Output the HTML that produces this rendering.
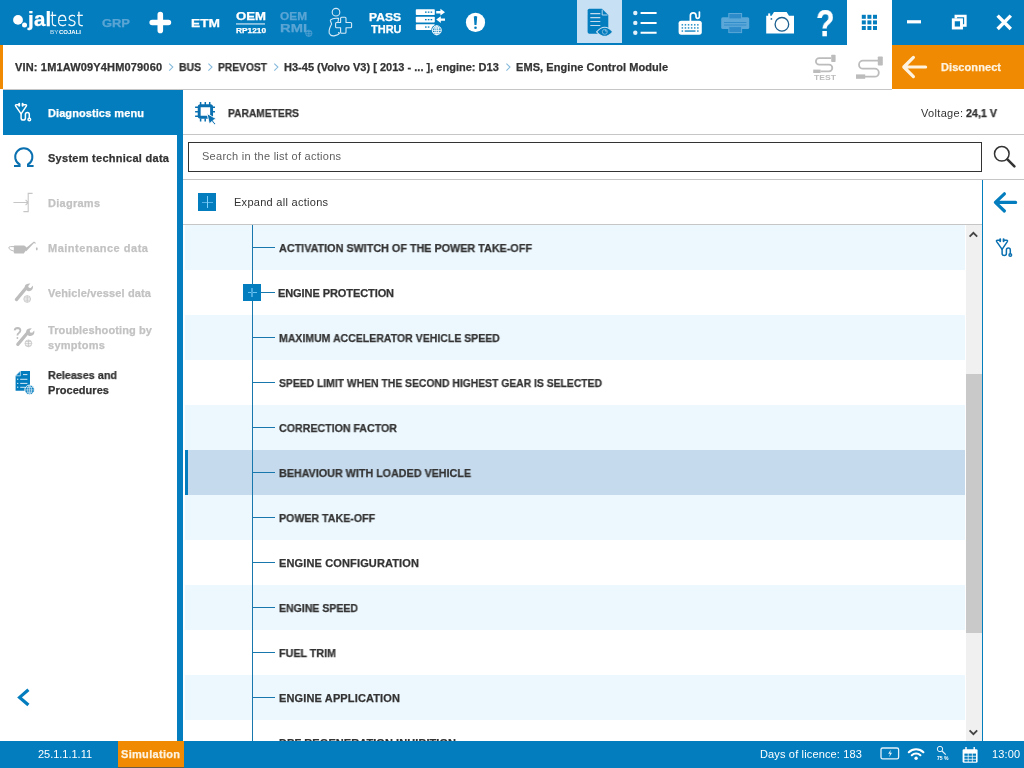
<!DOCTYPE html>
<html lang="en"><head>
<meta charset="utf-8">
<title>Jaltest - Parameters</title>
<style>
html,body{margin:0;padding:0;}
body{width:1024px;height:768px;overflow:hidden;background:#fff;position:relative;
  font-family:"Liberation Sans","DejaVu Sans",sans-serif;color:#333;}
.abs{position:absolute;}
svg{position:absolute;overflow:visible;}
.t{position:absolute;white-space:nowrap;will-change:transform;line-height:16px;height:16px;margin-top:-8px;font-size:11px;}
.b{font-weight:bold;}
.b,.lt,.crumb{-webkit-text-stroke:0.25px;}
#topbar{left:0;top:0;width:1024px;height:45px;background:#047dbe;}
#crumbline{left:3px;top:89px;width:889px;height:1px;background:#c6c6c6;}
#ostrip{left:0;top:45px;width:3px;height:44px;background:#f08a02;}
#disc{left:892px;top:45px;width:132px;height:44px;background:#f08a02;}
#menuactive{left:3px;top:90px;width:180px;height:45px;background:#047dbe;}
#vbar{left:177px;top:90px;width:6px;height:651px;background:#047dbe;}
#status{left:0;top:741px;width:1024px;height:27px;background:#047dbe;}
#sim{left:118px;top:741px;width:66px;height:26px;background:#f08a02;}
.hl{position:absolute;height:1px;background:#c6c6c6;}
.row{position:absolute;left:185px;width:780px;height:45px;}
.row.odd{background:#edf8fe;}
.row.sel{background:#c5daec;}
.conn{position:absolute;left:253px;width:22px;height:1px;background:#1878ae;}
.dis{color:#c2c2c2;}
.lt{font-weight:bold;color:#333;left:278.6px;}
.crumb{font-weight:bold;color:#333;font-size:11px;}
.sep{color:#7fb2d6;font-size:13px;}
.w{color:#fff;}
</style>
</head>
<body>
<!-- TOP BAR -->
<div id="topbar" class="abs"></div>
<div class="abs" style="left:577px;top:0;width:45px;height:43px;background:#c8e0f3;"></div>
<div class="abs" style="left:847px;top:0;width:45px;height:46px;background:#fff;"></div>
<!--TOPICONS_START-->
<!-- logo -->
<svg width="1024" height="45" style="left:0;top:0" viewBox="0 0 1024 45">
 <circle cx="18" cy="19.9" r="4.9" fill="#fff"></circle>
 <circle cx="24.5" cy="25" r="2.5" fill="#fff"></circle>
 <!-- plus -->
 <path d="M152.2 22.5H168.4M160.3 14.6V30.4" stroke="#fff" stroke-width="5.6" stroke-linecap="round" fill="none"></path>
 <!-- OEM underline -->
 <rect x="236" y="23.4" width="29" height="1.1" fill="#e4f1fa"></rect>
 <!-- small globe next to RMI -->
 <g stroke="#5aa5d4" stroke-width="0.7" fill="none"><circle cx="308.8" cy="33.3" r="3.2"></circle><path d="M305.6 33.3h6.4M308.8 30.1v6.4M306.3 31.5h5M306.3 35.1h5"></path></g>
 <!-- person + plus (outline) -->
 <g stroke="#d6e9f6" stroke-width="1.1" fill="none" stroke-linejoin="round">
  <circle cx="336" cy="12.2" r="3.8"></circle>
  <path d="M330.2 20.2Q333 17.6 338.6 18.4L338 22 M330.2 20.2L331.6 24Q328.4 30 329.2 33.2Q331 36.8 335 35.6Q339.4 34.4 339.6 33L338 32.6"></path>
  <path d="M341.6 17.3h3.4a1 1 0 0 1 1 1v4.2h4.6a1 1 0 0 1 1 1v3.2a1 1 0 0 1 -1 1h-4.6v4.6a1 1 0 0 1 -1 1h-3.4a1 1 0 0 1 -1 -1v-4.6h-4a1 1 0 0 1 -1 -1v-3.2a1 1 0 0 1 1 -1h4v-4.2a1 1 0 0 1 1 -1z"></path>
 </g>
 <!-- server icon -->
 <g fill="#fff">
  <rect x="415.8" y="9.2" width="19" height="5.8" rx="0.8"></rect>
  <rect x="415.8" y="16.8" width="19" height="5.8" rx="0.8"></rect>
  <rect x="415.8" y="24.2" width="19" height="5.8" rx="0.8"></rect>
  <path d="M436.2 11h4.2v-2.2l4.6 3.4l-4.6 3.4v-2.2h-4.2z"></path>
  <path d="M445 18.4h-4.2v-2.2l-4.6 3.4l4.6 3.4v-2.2h4.2z"></path>
 </g>
 <g fill="#047dbe"><rect x="425" y="11.5" width="1.6" height="1.3"></rect><rect x="427.8" y="11.5" width="1.6" height="1.3"></rect><rect x="430.6" y="11.5" width="1.6" height="1.3"></rect>
  <rect x="425" y="19" width="1.6" height="1.3"></rect><rect x="427.8" y="19" width="1.6" height="1.3"></rect><rect x="430.6" y="19" width="1.6" height="1.3"></rect>
  <rect x="425" y="26.4" width="1.6" height="1.3"></rect><rect x="427.8" y="26.4" width="1.6" height="1.3"></rect>
  <circle cx="436.8" cy="30.3" r="5.6"></circle></g>
 <g stroke="#fff" stroke-width="0.9" fill="none"><circle cx="436.8" cy="30.3" r="4.5"></circle><ellipse cx="436.8" cy="30.3" rx="2" ry="4.5"></ellipse><path d="M432.3 30.3h9M433 28h7.6M433 32.6h7.6M436.8 25.8v9"></path></g>
 <!-- exclamation -->
 <circle cx="475.5" cy="22.4" r="9.6" fill="#fff"></circle>
 <path d="M473.8 16.6q1.7-1.2 3.4 0l-0.7 8.4h-2z" fill="#047dbe"></path>
 <circle cx="475.5" cy="27.7" r="1.3" fill="#047dbe"></circle>
 <!-- doc + eye (active) -->
 <path d="M589.4 8.8h12.6l6.3 6.3v16.9a1.8 1.8 0 0 1 -1.8 1.8h-17.1a1.8 1.8 0 0 1 -1.8 -1.8v-21.4a1.8 1.8 0 0 1 1.8 -1.8z" fill="#047dbe"></path>
 <path d="M602.2 9.6v5.4h5.4" stroke="#c8e0f3" stroke-width="0.9" fill="none"></path>
 <path d="M590.3 13.7h10M590.3 17.6h10M590.3 21.5h10M590.3 25.5h10" stroke="#c5daec" stroke-width="1.2"></path>
 <path d="M596.6 31.8Q604.7 22.6 612.8 31.8Q604.7 41 596.6 31.8z" fill="#047dbe" stroke="#c8e0f3" stroke-width="1.1"></path>
 <circle cx="604.8" cy="31.8" r="2.5" fill="none" stroke="#9cc8e8" stroke-width="0.7"></circle><path d="M604.8 30.4a1.4 1.4 0 0 1 1.4 1.4" stroke="#c8e0f3" stroke-width="0.7" fill="none"></path>
 <!-- list icon -->
 <g fill="#e4f1fa"><circle cx="635.3" cy="13" r="2.2"></circle><circle cx="635.3" cy="22.9" r="2.2"></circle><circle cx="635.3" cy="32.7" r="2.2"></circle></g>
 <path d="M640.6 13h16M640.6 22.9h16M640.6 32.7h16" stroke="#fff" stroke-width="2"></path>
 <!-- keyboard -->
 <rect x="678.6" y="20.7" width="23.2" height="14" rx="2.6" fill="#fff"></rect>
 <path d="M690.4 21v-5.4a2.8 2.8 0 0 1 5.6 0v1a1.7 1.7 0 0 0 3.4 0v-4.6" stroke="#fff" stroke-width="1.7" fill="none" stroke-linecap="round"></path>
 <g fill="#047dbe">
  <rect x="681.6" y="24.2" width="1.5" height="1.3"></rect><rect x="684.7" y="24.2" width="1.5" height="1.3"></rect><rect x="687.8" y="24.2" width="1.5" height="1.3"></rect><rect x="690.9" y="24.2" width="1.5" height="1.3"></rect><rect x="694" y="24.2" width="1.5" height="1.3"></rect><rect x="697.1" y="24.2" width="1.5" height="1.3"></rect>
  <rect x="681.6" y="27.3" width="1.5" height="1.3"></rect><rect x="684.7" y="27.3" width="1.5" height="1.3"></rect><rect x="687.8" y="27.3" width="1.5" height="1.3"></rect><rect x="690.9" y="27.3" width="1.5" height="1.3"></rect><rect x="694" y="27.3" width="1.5" height="1.3"></rect><rect x="697.1" y="27.3" width="1.5" height="1.3"></rect>
  <rect x="681.6" y="30.4" width="1.5" height="1.3"></rect><rect x="684.7" y="30.4" width="10.8" height="1.3"></rect><rect x="697.1" y="30.4" width="1.5" height="1.3"></rect>
 </g>
 <!-- printer (disabled) -->
 <g fill="#5aa7d8">
  <rect x="721.2" y="17.2" width="28" height="11.8" rx="1.5"></rect>
 </g>
 <g fill="#2c8bc8" stroke="#5aa7d8" stroke-width="1"><rect x="728.8" y="13.5" width="12.8" height="5.4"></rect><rect x="728.8" y="26.6" width="12.8" height="6"></rect></g>
 <path d="M724 22.5h22.4M724 25h22.4" stroke="#2c8bc8" stroke-width="0.9"></path>
 <!-- camera -->
 <path d="M766.2 15.8h5.4l2.4-3.9h12.6l2.4 3.9h5v17.6h-27.8z" fill="#fff"></path>
 <rect x="768.2" y="13.4" width="2" height="2.6" fill="#fff"></rect>
 <circle cx="781.9" cy="24.3" r="6.8" fill="#fff" stroke="#1a5f8f" stroke-width="1.3"></circle>
 <circle cx="771.4" cy="18.9" r="0.9" fill="#1f6fa3"></circle>
 <!-- grid -->
 <g fill="#047dbe">
  <rect x="861.8" y="14.8" width="4" height="4"></rect><rect x="867.4" y="14.8" width="4" height="4"></rect><rect x="873" y="14.8" width="4" height="4"></rect>
  <rect x="861.8" y="20.4" width="4" height="4"></rect><rect x="867.4" y="20.4" width="4" height="4"></rect><rect x="873" y="20.4" width="4" height="4"></rect>
  <rect x="861.8" y="26" width="4" height="4"></rect><rect x="867.4" y="26" width="4" height="4"></rect><rect x="873" y="26" width="4" height="4"></rect>
 </g>
 <!-- window controls -->
 <rect x="907" y="20.2" width="14" height="3.2" fill="#fff"></rect>
 <path d="M955.8 18.4v-2.4h9.6v9.4h-2.6" stroke="#fff" stroke-width="2.5" fill="none"></path>
 <rect x="953.3" y="19.8" width="8.2" height="8.2" stroke="#fff" stroke-width="2.9" fill="none"></rect>
 <path d="M997.6 15.6l13.2 13.4M1010.8 15.6l-13.2 13.4" stroke="#fff" stroke-width="3.4" fill="none"></path>
</svg>
<span class="t w" style="left:28.2px;top:19.3px;font-size:20.5px;line-height:24px;height:24px;margin-top:-12px"><span style="display: inline-block; width: 21.6px; font-weight: bold; -webkit-text-stroke: 0.25px rgb(255, 255, 255); letter-spacing: 0.2px;">jal</span><span style="display: inline-block; position: relative; top: -0.4px; font-size: 19.4px; font-family: &quot;DejaVu Sans Light&quot;, &quot;DejaVu Sans&quot;, sans-serif; font-weight: 200; -webkit-text-stroke: 0.35px rgb(255, 255, 255); transform: scaleX(0.897); transform-origin: 0px 50%;">test</span></span>
<span class="t w" style="left: 50.2px; top: 32.6px; font-size: 4.6px; line-height: 6px; height: 6px; margin-top: -3px; color: rgb(207, 228, 243); transform: scaleX(1.368); transform-origin: 0px 50%;">BY</span>
<span class="t b w" style="left: 59.4px; top: 32.6px; font-size: 4.8px; line-height: 6px; height: 6px; margin-top: -3px; -webkit-text-stroke: 0px; transform: scaleX(1.25); transform-origin: 0px 50%;">COJALI</span>
<span class="t b" style="left: 102px; top: 22.5px; font-size: 10.5px; color: rgb(90, 165, 212); transform: scaleX(1.23); transform-origin: 0px 50%;">GRP</span>
<span class="t b w" style="left: 191px; top: 22.7px; font-size: 10.8px; transform: scaleX(1.272); transform-origin: 0px 50%;">ETM</span>
<span class="t b w" style="left: 235.5px; top: 17.4px; font-size: 10.4px; transform: scaleX(1.267); transform-origin: 0px 50%;">OEM</span>
<span class="t b w" style="left: 235.5px; top: 30.8px; font-size: 7.4px; line-height: 10px; height: 10px; margin-top: -5px; transform: scaleX(1.123); transform-origin: 0px 50%;">RP1210</span>
<span class="t b" style="left: 279.5px; top: 17px; font-size: 10.4px; color: rgb(90, 165, 212); transform: scaleX(1.141); transform-origin: 0px 50%;">OEM</span>
<span class="t b" style="left: 279.5px; top: 27.7px; font-size: 11.8px; color: rgb(90, 165, 212); transform: scaleX(1.249); transform-origin: 0px 50%;">RMI</span>
<span class="t b w" style="left: 369.4px; top: 17px; font-size: 10.6px; transform: scaleX(1.14); transform-origin: 0px 50%;">PASS</span>
<span class="t b w" style="left: 370.8px; top: 28.5px; font-size: 10.6px; transform: scaleX(1.036); transform-origin: 0px 50%;">THRU</span>
<span class="t b w" style="left:816.2px;top:24px;font-size:36px;line-height:40px;height:40px;margin-top:-20px;transform:scaleX(0.84);transform-origin:0 50%;">?</span>
<!--TOPICONS_END-->

<!-- BREADCRUMB ROW -->
<div id="crumbline" class="abs"></div>
<div id="ostrip" class="abs"></div>
<span class="t crumb" style="left: 15px; top: 67px; letter-spacing: 0.16px;">VIN: 1M1AW09Y4HM079060</span>
<span class="t crumb" style="left: 179px; top: 67px; transform: scaleX(0.947); transform-origin: 0px 50%;">BUS</span>
<span class="t crumb" style="left: 218px; top: 67px; transform: scaleX(0.932); transform-origin: 0px 50%;">PREVOST</span>
<span class="t crumb" style="left: 284px; top: 67px; letter-spacing: 0.01px;">H3-45 (Volvo V3) [ 2013 - ... ], engine: D13</span>
<span class="t crumb" style="left: 516px; top: 67px; letter-spacing: 0.07px;">EMS, Engine Control Module</span>
<svg width="1024" height="46" style="left:0;top:44px" viewBox="0 44 1024 46">
 <g stroke="#86badc" stroke-width="1.1" fill="none">
  <path d="M169.2 63.6l3.6 3.5l-3.6 3.5"></path><path d="M208.4 63.6l3.6 3.5l-3.6 3.5"></path><path d="M274.3 63.6l3.6 3.5l-3.6 3.5"></path><path d="M506.4 63.6l3.6 3.5l-3.6 3.5"></path>
 </g>
 <!-- cable TEST icon -->
 <g stroke="#bcbcbc" stroke-width="1.8" fill="none">
  <path d="M831 58.1H819.2a3.3 3.3 0 0 0 0 6.6H829a3.3 3.3 0 0 1 0 6.6H820.6"></path>
  <path d="M878 60.7H863a4 4 0 0 0 0 8H874.8a4 4 0 0 1 0 8H865"></path>
 </g>
 <g fill="#bcbcbc">
  <rect x="831.2" y="54.8" width="4.4" height="7.2" rx="0.8"></rect>
  <rect x="813.2" y="69.6" width="7.4" height="3.4"></rect>
  <rect x="877.8" y="56.4" width="5" height="9.2" rx="0.8"></rect>
  <rect x="856" y="74.4" width="9.2" height="4.4"></rect>
 </g>
 <!-- disconnect arrow -->
</svg>
<span class="t" style="left: 813.5px; top: 77.8px; font-size: 7.6px; line-height: 10px; height: 10px; margin-top: -5px; color: rgb(188, 188, 188); font-weight: bold; transform: scaleX(1.133); transform-origin: 0px 50%;">TEST</span>
<div id="disc" class="abs"></div>
<svg width="30" height="30" style="left:900px;top:52px" viewBox="900 52 30 30"><path d="M904.4 67H925.6M913.4 57.4L903.8 67L913.4 76.6" stroke="#fdf3e0" stroke-width="3.2" fill="none" stroke-linecap="round" stroke-linejoin="round"></path></svg>
<span class="t b" style="left: 941px; top: 67px; color: rgb(253, 243, 224); letter-spacing: 0.08px;">Disconnect</span>

<!-- LEFT MENU -->
<div id="menuactive" class="abs"></div>
<div id="vbar" class="abs"></div>
<span class="t b w" style="left: 48px; top: 113px; letter-spacing: 0.08px;">Diagnostics menu</span>
<span class="t b" style="left: 48px; top: 158px; letter-spacing: 0.27px;">System technical data</span>
<span class="t b dis" style="left: 48px; top: 203px; letter-spacing: 0.27px;">Diagrams</span>
<span class="t b dis" style="left: 48px; top: 248px; letter-spacing: 0.51px;">Maintenance data</span>
<span class="t b dis" style="left: 48px; top: 293px; letter-spacing: 0.15px;">Vehicle/vessel data</span>
<span class="t b dis" style="left: 48px; top: 330px; letter-spacing: 0.11px;">Troubleshooting by</span>
<span class="t b dis" style="left: 48px; top: 345px; letter-spacing: 0.28px;">symptoms</span>
<span class="t b" style="left: 48px; top: 375px; transform: scaleX(0.981); transform-origin: 0px 50%;">Releases and</span>
<span class="t b" style="left: 48px; top: 390px; letter-spacing: 0.05px;">Procedures</span>
<svg width="183" height="651" style="left:0;top:90px" viewBox="0 90 183 651">
 <g transform="translate(0 0)" stroke="#fff" stroke-width="1.5" fill="none" stroke-linecap="round" stroke-linejoin="round">
  <path d="M19.2 104.8H16.4Q15 104.8 15.7 106.1L21.1 113.9V117.9a2.15 2.15 0 0 0 4.3 0V114.5a1.95 1.95 0 0 1 3.9 0V117.9"></path>
  <path d="M22.6 104.8H25.6Q27 104.8 26.3 106.1L21.1 113.9"></path>
  <path d="M19.2 103.6v2.2M22.6 103.6v2.2" stroke-width="1.9"></path>
  <circle cx="29.3" cy="119.5" r="1.3"></circle></g>
 <!-- omega -->
 <path d="M14 166h5.6v-1.6a8.6 8.6 0 1 1 8.4 0v1.6h5.6" stroke="#0a70b0" stroke-width="2" fill="none"></path>
 <!-- diagrams -->
 <g stroke="#c6c6c6" stroke-width="1.1" fill="none"><path d="M13.4 202.5h14.8M32.6 193.4h-4.4v18.2h-4.8M25.6 199.8l2.6 2.7l-2.6 2.7"></path></g>
 <!-- oil can -->
 <g fill="#bdbdbd"><path d="M14.6 245.4h9.6l2.4 1.8v2.4l-2.8 3.8h-9.2q-0.8 0 -0.8 -0.8v-6.4q0 -0.8 0.8 -0.8z"></path><path d="M25.4 248.6l8.6-7.2l2 1.6l-0.8 0.8l-1.2-0.8l-8 8.6z"></path><ellipse cx="36.8" cy="248.8" rx="0.9" ry="1.6"></ellipse></g>
 <path d="M14 246.6h-3.4q-2 0 -1.8 1.4q0.4 2 5.2 3.2" stroke="#bdbdbd" stroke-width="1" fill="none"></path>
 <!-- wrench + globe -->
 <g stroke="#bdbdbd" fill="none">
  <path d="M16.4 299.6L26.6 287.4" stroke-width="3.2" stroke-linecap="round"></path>
  <path d="M30.4 283.4l-2.2 2.6l0.6 1.8l2 0.2l2-2.4q0.8 3.2-1.6 4.8q-2.2 1.4-4.4 0.2q-2.4-1.6-2-4.4q0.8-3 5.6-2.8z" fill="#bdbdbd" stroke="none"></path>
  <g stroke-width="0.7"><circle cx="27.2" cy="299" r="3.4"></circle><path d="M23.8 299h6.8M27.2 295.6v6.8M24.6 297.2h5.2M24.6 300.8h5.2"></path></g>
 </g>
 <g stroke="#bdbdbd" fill="none">
  <path d="M17.8 344.4L28 332.2" stroke-width="3.2" stroke-linecap="round"></path>
  <path d="M31.8 328.2l-2.2 2.6l0.6 1.8l2 0.2l2-2.4q0.8 3.2-1.6 4.8q-2.2 1.4-4.4 0.2q-2.4-1.6-2-4.4q0.8-3 5.6-2.8z" fill="#bdbdbd" stroke="none"></path>
  <g stroke-width="0.7"><circle cx="28.4" cy="343.4" r="3.4"></circle><path d="M25 343.4h6.8M28.4 340v6.8M25.8 341.6h5.2M25.8 345.2h5.2"></path></g>
  <path d="M14.6 330.4q0.4-2.4 3-2.4q2.8 0.2 2.8 2.6q0 1.4-1.6 2.4q-1.4 0.8-1.4 2.6" stroke-width="1.8"></path>
 </g>
 <circle cx="17.4" cy="338" r="0.9" fill="#bdbdbd"></circle>
 <!-- releases doc -->
 <path d="M20.4 371h9.6v19.7h-14.4v-14.9z" fill="#047dbe"></path>
 <path d="M15.6 375.8l4.8-4.8v4.8z" fill="#047dbe" stroke="#fff" stroke-width="0.6"></path>
 <g stroke="#d6e9f6" stroke-width="1"><path d="M23 374.6h4.4M20.2 379.3h7.2M20.2 383.4h7.2M20.2 387.3h5"></path></g>
 <g fill="#d6e9f6"><circle cx="17.7" cy="379.3" r="0.7"></circle><circle cx="17.7" cy="383.4" r="0.7"></circle><circle cx="17.7" cy="387.3" r="0.7"></circle></g>
 <circle cx="29.6" cy="389.9" r="4.8" fill="#047dbe" stroke="#fff" stroke-width="0.9"></circle>
 <g stroke="#d6e9f6" stroke-width="0.7" fill="none"><path d="M25.4 389.9h8.4M29.6 385.7v8.4M26.4 387.6h6.4M26.4 392.2h6.4"></path><ellipse cx="29.6" cy="389.9" rx="2" ry="4.2"></ellipse></g>
 <!-- collapse chevron -->
 <path d="M28.4 689.8L19.6 697.4L28.4 705" stroke="#047dbe" stroke-width="3.2" fill="none"></path>
</svg>
<!-- parameters icon -->
<svg width="30" height="30" style="left:192px;top:98px" viewBox="192 98 30 30">
 <rect x="199.2" y="105.7" width="12.4" height="11.6" rx="1.2" fill="none" stroke="#0a70b0" stroke-width="2.9"></rect>
 <g stroke="#0a70b0" stroke-width="1.5"><path d="M200.6 101.9v3M205.3 101.9v3M209.7 101.9v3M200.6 118.6v2.8M205.2 118.6v2.8M195.1 107.3h3M195.1 111.8h3M195.1 116.2h3M212.8 107.3h2.2M212.8 111.8h2.2"></path></g>
 <path d="M207 113.6l9.2 5.2l-3.2 1.6l2.6 3.4l-1.2 1l-2.6-3.4l-2.4 2.6z" fill="#0a70b0" stroke="#fff" stroke-width="0.9"></path>
</svg>

<!-- CONTENT HEADER -->
<span class="t b" style="left: 228px; top: 113px; transform: scaleX(0.932); transform-origin: 0px 50%;">PARAMETERS</span>
<span class="t" style="left: 921px; top: 113px; letter-spacing: 0.32px;">Voltage:</span>
<span class="t b" style="left: 966px; top: 113px; transform: scaleX(0.974); transform-origin: 0px 50%;">24,1 V</span>
<div class="hl" style="left:183px;top:134px;width:841px;"></div>
<div class="abs" style="left:188px;top:142px;width:792px;height:28px;border:1px solid #333;background:#fff;box-sizing:content-box;"></div>
<span class="t" style="left: 202px; top: 156px; color: rgb(96, 96, 96); letter-spacing: 0.27px;">Search in the list of actions</span>
<div class="hl" style="left:183px;top:179px;width:841px;"></div>
<div class="abs" style="left:198px;top:193px;width:18px;height:18px;background:#047dbe;"></div>
<div class="abs" style="left:202px;top:201.5px;width:11px;height:1px;background:#58b4e8;"></div>
<div class="abs" style="left:207px;top:196px;width:1px;height:12px;background:#7fd0fa;"></div>
<span class="t" style="left: 234px; top: 202px; letter-spacing: 0.28px;">Expand all actions</span>
<div class="hl" style="left:183px;top:224px;width:799px;"></div>

<!-- LIST -->
<div class="abs" style="left:0;top:0;width:1024px;height:741px;overflow:hidden;">
<div class="row odd" style="top:225px"></div>
<div class="row odd" style="top:315px"></div>
<div class="row odd" style="top:405px"></div>
<div class="row sel" style="top:450px"></div>
<div class="abs" style="left:185px;top:450px;width:3px;height:45px;background:#047dbe;"></div>
<div class="row odd" style="top:495px"></div>
<div class="row odd" style="top:585px"></div>
<div class="row odd" style="top:675px"></div>
<div class="abs" style="left:252px;top:225px;width:1px;height:516px;background:#1878ae;"></div>
<div class="conn" style="top:247px"></div>
<div class="conn" style="top:292px"></div>
<div class="conn" style="top:337px"></div>
<div class="conn" style="top:382px"></div>
<div class="conn" style="top:427px"></div>
<div class="conn" style="top:472px"></div>
<div class="conn" style="top:517px"></div>
<div class="conn" style="top:562px"></div>
<div class="conn" style="top:607px"></div>
<div class="conn" style="top:652px"></div>
<div class="conn" style="top:697px"></div>
<div class="abs" style="left:243px;top:284px;width:18px;height:17px;background:#047dbe;"></div>
<div class="abs" style="left:247.5px;top:292px;width:9.5px;height:1px;background:#6cc4f2;"></div>
<div class="abs" style="left:251.4px;top:287.7px;width:1.2px;height:9.4px;background:#4aa9de;"></div>
<span class="t lt" style="top: 248px; transform: scaleX(0.981); transform-origin: 0px 50%;">ACTIVATION SWITCH OF THE POWER TAKE-OFF</span>
<span class="t lt" style="top: 293px; left: 278px; letter-spacing: -0.08px;">ENGINE PROTECTION</span>
<span class="t lt" style="top: 338px; transform: scaleX(0.957); transform-origin: 0px 50%;">MAXIMUM ACCELERATOR VEHICLE SPEED</span>
<span class="t lt" style="top: 383px; transform: scaleX(0.942); transform-origin: 0px 50%;">SPEED LIMIT WHEN THE SECOND HIGHEST GEAR IS SELECTED</span>
<span class="t lt" style="top: 428px; transform: scaleX(0.967); transform-origin: 0px 50%;">CORRECTION FACTOR</span>
<span class="t lt" style="top: 473px; transform: scaleX(0.977); transform-origin: 0px 50%;">BEHAVIOUR WITH LOADED VEHICLE</span>
<span class="t lt" style="top: 518px; transform: scaleX(0.966); transform-origin: 0px 50%;">POWER TAKE-OFF</span>
<span class="t lt" style="top: 563px; letter-spacing: 0.14px;">ENGINE CONFIGURATION</span>
<span class="t lt" style="top: 608px; transform: scaleX(0.957); transform-origin: 0px 50%;">ENGINE SPEED</span>
<span class="t lt" style="top: 653px; transform: scaleX(0.975); transform-origin: 0px 50%;">FUEL TRIM</span>
<span class="t lt" style="top: 698px; letter-spacing: 0.14px;">ENGINE APPLICATION</span>
<span class="t lt" style="top: 743px; letter-spacing: 0.07px;">DPF REGENERATION INHIBITION</span>
</div>

<!-- SCROLLBAR + RIGHT PANEL -->
<div class="abs" style="left:966px;top:225px;width:16px;height:516px;background:#f0f0f0;"></div>
<div class="abs" style="left:966px;top:374px;width:16px;height:259px;background:#c9c9c9;"></div>
<div class="abs" style="left:982px;top:180px;width:1.2px;height:561px;background:#047dbe;"></div>
<svg width="42" height="130" style="left:982px;top:136px" viewBox="982 136 42 130">
 <circle cx="1001.8" cy="153.8" r="7.3" stroke="#333" stroke-width="1.5" fill="none"></circle>
 <path d="M1007.4 159.4l7 7" stroke="#333" stroke-width="2.6" stroke-linecap="round"></path>
 <path d="M995.8 202.4H1015.6M1004.4 193.8L995.4 202.4L1004.4 211" stroke="#047dbe" stroke-width="3.2" fill="none" stroke-linecap="round" stroke-linejoin="round"></path>
 <g transform="translate(981 135.5)" stroke="#0a70b0" stroke-width="1.5" fill="none" stroke-linecap="round" stroke-linejoin="round">
  <path d="M19.2 104.8H16.4Q15 104.8 15.7 106.1L21.1 113.9V117.9a2.15 2.15 0 0 0 4.3 0V114.5a1.95 1.95 0 0 1 3.9 0V117.9"></path>
  <path d="M22.6 104.8H25.6Q27 104.8 26.3 106.1L21.1 113.9"></path>
  <path d="M19.2 103.6v2.2M22.6 103.6v2.2" stroke-width="1.9"></path>
  <circle cx="29.3" cy="119.5" r="1.3"></circle></g>
 <path d="M969.6 236.6l3.8-3.8l3.8 3.8" stroke="#444" stroke-width="1.8" fill="none"></path>
</svg>
<svg width="16" height="16" style="left:966px;top:726px" viewBox="966 726 16 16"><path d="M969.6 730.4l3.8 3.8l3.8-3.8" stroke="#444" stroke-width="1.8" fill="none"></path></svg>

<!-- STATUS BAR -->
<div id="status" class="abs"></div>
<div id="sim" class="abs"></div>
<div class="abs" style="left:118px;top:767px;width:66px;height:1px;background:#6b5a45;"></div>
<span class="t w" style="left: 38px; top: 754px; letter-spacing: -0.02px;">25.1.1.1.11</span>
<span class="t b" style="left: 121px; top: 754px; color: rgb(253, 243, 224); letter-spacing: 0.31px;">Simulation</span>
<span class="t w" style="left: 760px; top: 754px; letter-spacing: 0.15px;">Days of licence: 183</span>
<span class="t w" style="left: 992px; top: 754px; letter-spacing: 0.12px;">13:00</span>
<svg width="110" height="27" style="left:874px;top:741px" viewBox="874 741 110 27">
 <rect x="881" y="748" width="17.6" height="10.8" rx="1.6" stroke="#e4f1fa" stroke-width="1.3" fill="none"></rect>
 <path d="M890.8 749.8l-2.6 4h1.8l-0.8 3.4l2.8-4.4h-1.8z" fill="#e4f1fa"></path>
 <g stroke="#fff" fill="none" stroke-width="2.1" stroke-linecap="round"><path d="M908.8 752.2a10.4 10.4 0 0 1 14.6 0"></path><path d="M911.8 755.2a6.2 6.2 0 0 1 8.6 0"></path></g>
 <circle cx="916.1" cy="758.2" r="1.7" fill="#fff"></circle>
 <circle cx="940" cy="749" r="2.7" stroke="#e4f1fa" stroke-width="1" fill="none"></circle><path d="M942 751l3.8 3.6" stroke="#e4f1fa" stroke-width="1.2"></path>
 <rect x="962.6" y="749.2" width="15" height="13.6" rx="1.4" fill="#fff"></rect>
 <path d="M966 747v3.4M974.2 747v3.4" stroke="#fff" stroke-width="1.4"></path>
 <g fill="#047dbe"><rect x="964.4" y="753.6" width="3.4" height="2.2"></rect><rect x="968.5" y="753.6" width="3.4" height="2.2"></rect><rect x="972.6" y="753.6" width="3.4" height="2.2"></rect><rect x="964.4" y="756.6" width="3.4" height="2.2"></rect><rect x="968.5" y="756.6" width="3.4" height="2.2"></rect><rect x="972.6" y="756.6" width="3.4" height="2.2"></rect><rect x="964.4" y="759.6" width="3.4" height="2"></rect><rect x="968.5" y="759.6" width="3.4" height="2"></rect><rect x="972.6" y="759.6" width="3.4" height="2"></rect></g>
</svg>
<span class="t b w" style="left: 936.6px; top: 759.2px; font-size: 4.6px; line-height: 6px; height: 6px; margin-top: -3px; -webkit-text-stroke: 0px; transform: scaleX(1.097); transform-origin: 0px 50%;">75 %</span>


</body></html>
